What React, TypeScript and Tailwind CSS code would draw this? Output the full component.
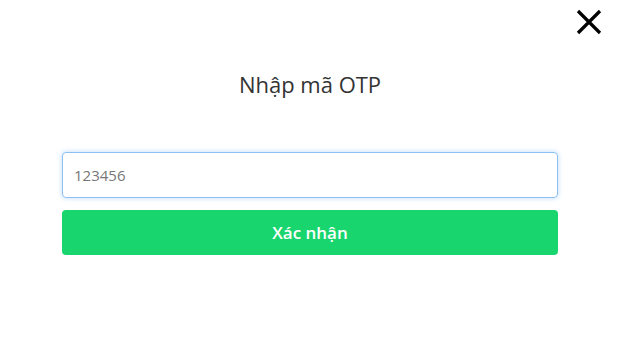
import React, { useState } from 'react';

const CloseIcon: React.FC = () => (
  <svg width="28" height="28" viewBox="0 0 28 28" fill="none">
    <path d="M3 3 L25 25 M25 3 L3 25" stroke="#000" strokeWidth="3.2" strokeLinecap="butt" />
  </svg>
);

const App: React.FC = () => {
  const [otp, setOtp] = useState('');

  return (
    <div className="relative w-full h-[363px] bg-white" style={{ fontFamily: '"Open Sans", "Noto Sans", sans-serif' }}>
      <button className="absolute top-[8px] right-[17px] p-0">
        <CloseIcon />
      </button>
      <div className="flex flex-col px-[62px] pt-[69px]">
        <h2 className="text-center text-[22px] leading-[30px] text-[#333]">Nhập mã OTP</h2>
        <input
          value={otp}
          onChange={e => setOtp(e.target.value)}
          placeholder="123456"
          className="mt-[53px] h-[46px] w-full rounded-[4px] border border-[#8cc0f3] px-[11px] text-[15px] text-[#555] placeholder:text-[#777] outline-none shadow-[0_0_4px_1px_rgba(120,180,240,0.35)]"
        />
        <button className="mt-[12px] h-[45px] w-full rounded-[4px] bg-[#18d56e] text-[17px] font-semibold text-white">
          Xác nhận
        </button>
      </div>
    </div>
  );
};

export default App;
